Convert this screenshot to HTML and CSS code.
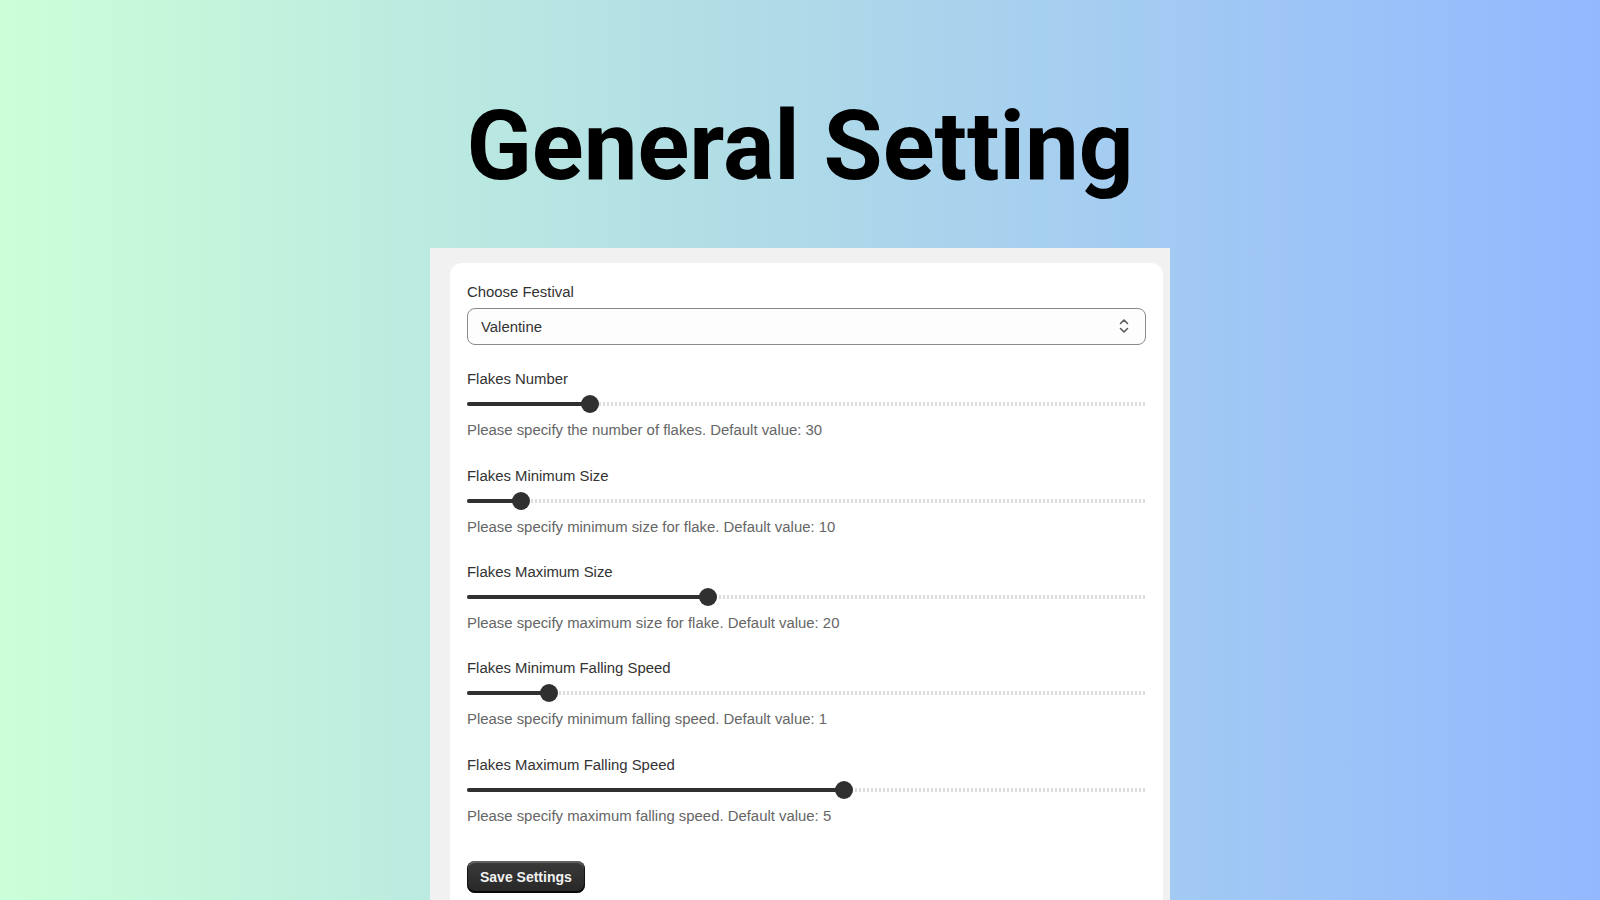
FILE: index.html
```html
<!DOCTYPE html>
<html lang="en">
<head>
    <meta charset="UTF-8">
    <meta name="viewport" content="width=device-width, initial-scale=1.0">
    <title>General Setting</title>
    <link rel="stylesheet" href="styles.css">
</head>
<body>
    <h1 class="title">General Setting</h1>

    <div class="panel">
        <div class="card">
            <div class="field">
                <label class="label" for="festival">Choose Festival</label>
                <div class="select-wrap">
                    <select id="festival" class="select">
                        <option>Valentine</option>
                        <option>Christmas</option>
                        <option>Halloween</option>
                    </select>
                    <svg class="select-icon" width="14" height="20" viewBox="0 0 14 20" fill="none">
                        <path d="M3.5 7.5 7 4 10.5 7.5" stroke="#5c5c5c" stroke-width="1.6" stroke-linecap="round" stroke-linejoin="round"/>
                        <path d="M3.5 12.5 7 16 10.5 12.5" stroke="#5c5c5c" stroke-width="1.6" stroke-linecap="round" stroke-linejoin="round"/>
                    </svg>
                </div>
            </div>

            <div class="slider-group">
                <div class="label">Flakes Number</div>
                <div class="range"><div class="range-fill" style="width: 18.1%"><span class="thumb"></span></div></div>
                <div class="help">Please specify the number of flakes. Default value: 30</div>
            </div>

            <div class="slider-group">
                <div class="label">Flakes Minimum Size</div>
                <div class="range"><div class="range-fill" style="width: 8%"><span class="thumb"></span></div></div>
                <div class="help">Please specify minimum size for flake. Default value: 10</div>
            </div>

            <div class="slider-group">
                <div class="label">Flakes Maximum Size</div>
                <div class="range"><div class="range-fill" style="width: 35.5%"><span class="thumb"></span></div></div>
                <div class="help">Please specify maximum size for flake. Default value: 20</div>
            </div>

            <div class="slider-group">
                <div class="label">Flakes Minimum Falling Speed</div>
                <div class="range"><div class="range-fill" style="width: 12.1%"><span class="thumb"></span></div></div>
                <div class="help">Please specify minimum falling speed. Default value: 1</div>
            </div>

            <div class="slider-group">
                <div class="label">Flakes Maximum Falling Speed</div>
                <div class="range"><div class="range-fill" style="width: 55.5%"><span class="thumb"></span></div></div>
                <div class="help">Please specify maximum falling speed. Default value: 5</div>
            </div>

            <button class="btn">Save Settings</button>
        </div>
    </div>
</body>
</html>
```

FILE: styles.css
```css
body {
    margin: 0;
    height: 100vh;
    overflow: hidden;
    font-family: "Liberation Sans", Arial, sans-serif;
    background: linear-gradient(90deg, #cbffd8 0%, #b1dde6 45%, #94b8ff 100%);
}

.title {
    margin: 0 0 44px;
    padding-top: 89px;
    text-align: center;
    font-family: Roboto, "Liberation Sans", sans-serif;
    font-weight: 700;
    font-size: 96px;
    line-height: 1.2;
    color: #000;
}

.panel {
    width: 740px;
    height: 100%;
    margin: 0 auto;
    padding: 15px 7px 0 20px;
    box-sizing: border-box;
    background-color: #f1f1f1;
}

.card {
    background-color: #fff;
    border-radius: 12px;
    padding: 19px 17px 40px;
    box-shadow: 0 1px 0 rgba(0, 0, 0, 0.07);
}

.label {
    display: block;
    font-size: 14.9px;
    line-height: 20px;
    color: #333;
}

.field {
    margin-bottom: 24px;
}

.field .label {
    margin-bottom: 6px;
}

.select-wrap {
    position: relative;
}

.select {
    appearance: none;
    -webkit-appearance: none;
    width: 100%;
    height: 37px;
    padding: 0 36px 0 13px;
    border: 1px solid #8a8a8a;
    border-radius: 8px;
    background-color: #fdfdfd;
    font-family: inherit;
    font-size: 14.9px;
    color: #333;
}

.select-icon {
    position: absolute;
    right: 15px;
    top: 8px;
}

.slider-group {
    margin-bottom: 25.4px;
}

.range {
    display: flex;
    align-items: center;
    height: 18px;
    margin: 6px 0 7px;
    background: repeating-linear-gradient(90deg, #dcdcdc 0 2px, transparent 2px 4px) center / 100% 4px no-repeat;
}

.range-fill {
    position: relative;
    height: 4px;
    border-radius: 2px;
    background-color: #303030;
}

.thumb {
    position: absolute;
    right: -9px;
    top: -7px;
    width: 18px;
    height: 18px;
    border-radius: 50%;
    background-color: #303030;
}

.help {
    font-size: 14.9px;
    line-height: 20px;
    color: #666;
}

.btn {
    margin-top: 10px;
    height: 32px;
    padding: 0 13px;
    border: none;
    border-radius: 8px;
    background: linear-gradient(#3a3a3a, #272727);
    box-shadow: inset 0 -1px 0 1px rgba(0, 0, 0, 0.8), inset 0 1px 0 1px rgba(255, 255, 255, 0.2);
    font-family: inherit;
    font-weight: 700;
    font-size: 14px;
    color: #f2f2f2;
    cursor: pointer;
}
```
